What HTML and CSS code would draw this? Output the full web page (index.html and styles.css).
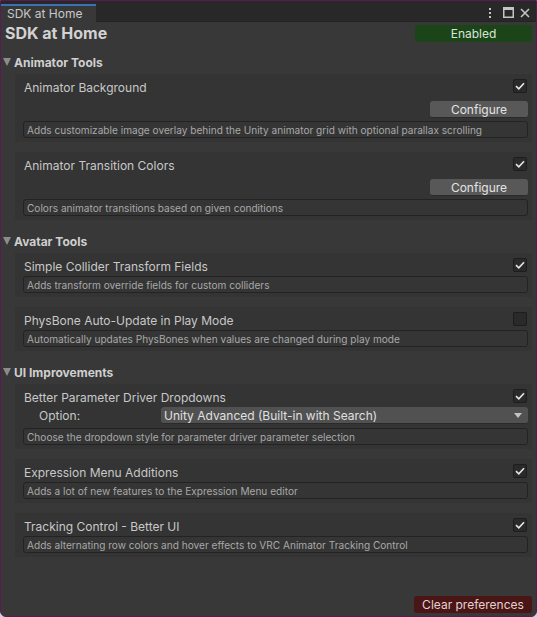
FILE: index.html
```html
<!DOCTYPE html>
<html>
<head>
<meta charset="utf-8">
<link rel="stylesheet" href="styles.css">
</head>
<body>
<div class="window">
  <div class="tabbar">
    <div class="tab">SDK at Home</div>
    <div class="tab-icons">
      <svg class="ico dots" width="6" height="12" viewBox="0 0 6 12"><rect x="2" y="1" width="2" height="2" fill="#c4c4c4"/><rect x="2" y="5" width="2" height="2" fill="#c4c4c4"/><rect x="2" y="9" width="2" height="2" fill="#c4c4c4"/></svg>
      <svg class="ico" width="11" height="11" viewBox="0 0 11 11"><rect x="0.75" y="0.75" width="9.5" height="9.5" fill="none" stroke="#c4c4c4" stroke-width="1.5"/><rect x="0.5" y="0.5" width="10" height="2.5" fill="#c4c4c4"/></svg>
      <svg class="ico" width="10" height="10" viewBox="0 0 10 10"><path d="M1 1 L9 9 M9 1 L1 9" stroke="#c4c4c4" stroke-width="1.6"/></svg>
    </div>
  </div>

  <div class="content">
    <div class="title-row">
      <div class="title">SDK at Home</div>
      <div class="btn btn-enabled">Enabled</div>
    </div>

    <div class="section">
      <div class="section-header"><span class="tri"></span>Animator Tools</div>
      <div class="item">
        <div class="item-row"><span class="label">Animator Background</span><span class="check on"><svg width="10" height="8" viewBox="0 0 10 8"><path d="M1 4.2 L3.8 6.8 L9 1.2" fill="none" stroke="#e6e6e6" stroke-width="1.6"/></svg></span></div>
        <div class="btn-row"><div class="btn btn-config">Configure</div></div>
        <div class="desc">Adds customizable image overlay behind the Unity animator grid with optional parallax scrolling</div>
      </div>
      <div class="item">
        <div class="item-row"><span class="label">Animator Transition Colors</span><span class="check on"><svg width="10" height="8" viewBox="0 0 10 8"><path d="M1 4.2 L3.8 6.8 L9 1.2" fill="none" stroke="#e6e6e6" stroke-width="1.6"/></svg></span></div>
        <div class="btn-row"><div class="btn btn-config">Configure</div></div>
        <div class="desc">Colors animator transitions based on given conditions</div>
      </div>
    </div>

    <div class="section">
      <div class="section-header"><span class="tri"></span>Avatar Tools</div>
      <div class="item">
        <div class="item-row"><span class="label">Simple Collider Transform Fields</span><span class="check on"><svg width="10" height="8" viewBox="0 0 10 8"><path d="M1 4.2 L3.8 6.8 L9 1.2" fill="none" stroke="#e6e6e6" stroke-width="1.6"/></svg></span></div>
        <div class="desc">Adds transform override fields for custom colliders</div>
      </div>
      <div class="item">
        <div class="item-row"><span class="label">PhysBone Auto-Update in Play Mode</span><span class="check"></span></div>
        <div class="desc">Automatically updates PhysBones when values are changed during play mode</div>
      </div>
    </div>

    <div class="section">
      <div class="section-header"><span class="tri"></span>UI Improvements</div>
      <div class="item">
        <div class="item-row"><span class="label">Better Parameter Driver Dropdowns</span><span class="check on"><svg width="10" height="8" viewBox="0 0 10 8"><path d="M1 4.2 L3.8 6.8 L9 1.2" fill="none" stroke="#e6e6e6" stroke-width="1.6"/></svg></span></div>
        <div class="option-row">
          <span class="option-label">Option:</span>
          <div class="dropdown"><span>Unity Advanced (Built-in with Search)</span><span class="dd-arrow"></span></div>
        </div>
        <div class="desc">Choose the dropdown style for parameter driver parameter selection</div>
      </div>
      <div class="item">
        <div class="item-row"><span class="label">Expression Menu Additions</span><span class="check on"><svg width="10" height="8" viewBox="0 0 10 8"><path d="M1 4.2 L3.8 6.8 L9 1.2" fill="none" stroke="#e6e6e6" stroke-width="1.6"/></svg></span></div>
        <div class="desc">Adds a lot of new features to the Expression Menu editor</div>
      </div>
      <div class="item">
        <div class="item-row"><span class="label">Tracking Control - Better UI</span><span class="check on"><svg width="10" height="8" viewBox="0 0 10 8"><path d="M1 4.2 L3.8 6.8 L9 1.2" fill="none" stroke="#e6e6e6" stroke-width="1.6"/></svg></span></div>
        <div class="desc">Adds alternating row colors and hover effects to VRC Animator Tracking Control</div>
      </div>
    </div>

    <div class="footer">
      <div class="btn btn-clear">Clear preferences</div>
    </div>
  </div>
</div>
</body>
</html>
```

FILE: styles.css
```css
* { box-sizing: border-box; }
html, body {
  margin: 0;
  padding: 0;
  background: #c9d3db;
}
body {
  font-family: Inter, "Noto Sans", sans-serif;
  color: #c4c4c4;
}
.window {
  width: 537px;
  height: 617px;
  border: 1px solid #5a1b52;
  border-radius: 0 0 6px 6px;
  background: #383838;
  display: flex;
  flex-direction: column;
  overflow: hidden;
}
.tabbar {
  height: 21px;
  background: #282828;
  border-bottom: 1px solid #232323;
  display: flex;
  align-items: flex-end;
  justify-content: space-between;
  flex-shrink: 0;
}
.tab {
  width: 95px;
  height: 18px;
  background: #383838;
  border-top: 2px solid #3a72b0;
  font-size: 12px;
  line-height: 16px;
  padding-left: 6px;
  color: #c8c8c8;
  margin-bottom: -1px;
}
.tab-icons {
  display: flex;
  align-items: center;
  gap: 6px;
  align-self: center;
  padding-right: 6px;
  margin-top: 3px;
}
.dots { margin-right: 4px; }
.ico { display: block; }
.content {
  flex: 1;
  display: flex;
  flex-direction: column;
}
.title-row {
  display: flex;
  justify-content: space-between;
  align-items: center;
  height: 22px;
  padding: 0 4px;
}
.title {
  font-size: 16px;
  font-weight: 700;
  color: #d2d2d2;
}
.btn {
  height: 17px;
  border-radius: 3px;
  font-size: 12px;
  line-height: 17px;
  text-align: center;
}
.btn-enabled {
  width: 117px;
  background: #1b4519;
  color: #d8e4d6;
}
.section {
  margin-top: 8px;
}
.section + .section { margin-top: 11px; }
.section-header {
  height: 20px;
  display: flex;
  align-items: center;
  font-size: 12px;
  font-weight: 700;
  color: #cfcfcf;
  padding-left: 2px;
  margin-bottom: 2px;
}
.tri {
  width: 0;
  height: 0;
  border-left: 4.5px solid transparent;
  border-right: 4.5px solid transparent;
  border-top: 8px solid #8c8c8c;
  margin-right: 3px;
}
.item {
  margin: 0 4px 0 14px;
  padding: 3px 4px 4px 8px;
  background: #343434;
}
.item + .item { margin-top: 10px; }
.item-row {
  height: 20px;
  display: flex;
  align-items: center;
  justify-content: space-between;
  padding-left: 1px;
  padding-right: 1px;
}
.label {
  font-size: 12px;
  color: #c8c8c8;
}
.check {
  width: 14px;
  height: 14px;
  border-radius: 2px;
  background: #2a2a2a;
  border: 1px solid #1d1d1d;
  display: flex;
  align-items: center;
  justify-content: center;
  margin-top: -2px;
}
.btn-row {
  display: flex;
  justify-content: flex-end;
  margin: 4px 0 3px 0;
}
.btn-config {
  width: 98px;
  background: #585858;
  color: #e4e4e4;
  border-bottom: 1px solid #2a2a2a;
  line-height: 17px;
}
.desc {
  height: 17px;
  border: 1px solid #232323;
  border-radius: 3px;
  background: #353535;
  font-size: 10.1px;
  line-height: 16px;
  padding-left: 3px;
  color: #a8a8a8;
  white-space: nowrap;
  overflow: hidden;
}
.option-row {
  display: flex;
  align-items: center;
  height: 17px;
  margin-bottom: 4px;
}
.option-label {
  width: 138px;
  padding-left: 16px;
  font-size: 12px;
  color: #c8c8c8;
}
.dropdown {
  flex: 1;
  height: 17px;
  background: #515151;
  border-radius: 3px;
  border-bottom: 1px solid #2a2a2a;
  display: flex;
  align-items: center;
  justify-content: space-between;
  padding: 0 6px 0 3px;
  font-size: 12px;
  color: #e0e0e0;
}
.dd-arrow {
  width: 0;
  height: 0;
  border-left: 4px solid transparent;
  border-right: 4px solid transparent;
  border-top: 5px solid #c4c4c4;
}
.footer {
  margin-top: auto;
  display: flex;
  justify-content: flex-end;
  padding: 0 4px 3px 0;
}
.btn-clear {
  width: 118px;
  background: #4a1515;
  color: #e2d2d2;
}
```
